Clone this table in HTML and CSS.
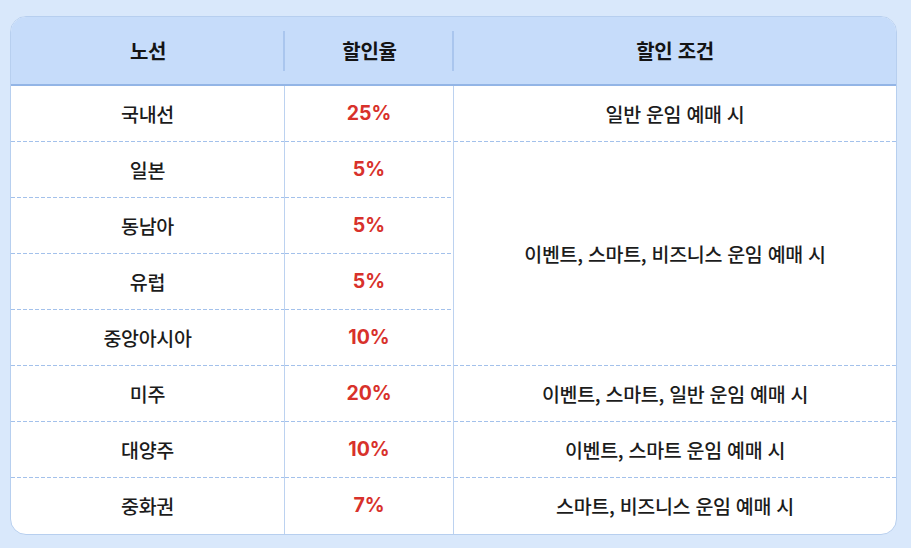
FILE: index.html
```html
<!DOCTYPE html>
<html lang="ko">
<head>
<meta charset="utf-8">
<title>노선별 할인율</title>
<link rel="stylesheet" href="styles.css">
</head>
<body>
<div class="wrap">
  <table class="rates">
    <colgroup>
      <col class="c1"><col class="c2"><col class="c3">
    </colgroup>
    <thead>
      <tr><th class="sep">노선</th><th class="sep">할인율</th><th>할인 조건</th></tr>
    </thead>
    <tbody>
      <tr><td>국내선</td><td class="pct">25%</td><td class="cond">일반 운임 예매 시</td></tr>
      <tr><td>일본</td><td class="pct">5%</td><td class="cond" rowspan="4">이벤트, 스마트, 비즈니스 운임 예매 시</td></tr>
      <tr><td>동남아</td><td class="pct">5%</td></tr>
      <tr><td>유럽</td><td class="pct">5%</td></tr>
      <tr><td>중앙아시아</td><td class="pct">10%</td></tr>
      <tr><td>미주</td><td class="pct">20%</td><td class="cond">이벤트, 스마트, 일반 운임 예매 시</td></tr>
      <tr><td>대양주</td><td class="pct">10%</td><td class="cond">이벤트, 스마트 운임 예매 시</td></tr>
      <tr class="last"><td>중화권</td><td class="pct">7%</td><td class="cond">스마트, 비즈니스 운임 예매 시</td></tr>
    </tbody>
  </table>
</div>
</body>
</html>
```
FILE: styles.css
```css
html, body {
  margin: 0;
  padding: 0;
  background: #d9e8fb;
}
body {
  font-family: "Noto Sans CJK KR", "Noto Sans", sans-serif;
  color: #1c1c1c;
}
.wrap {
  margin: 16px 14px 0 10px;
  border: 1px solid #b7cfef;
  border-radius: 16px;
  overflow: hidden;
  background: #fff;
}
.rates {
  width: 100%;
  border-collapse: separate;
  border-spacing: 0;
  table-layout: fixed;
}
.c1 { width: 274px; }
.c2 { width: 169px; }
.rates th {
  height: 67px;
  padding: 0;
  background-color: #c6dcfa;
  border-bottom: 2px solid #93b5e6;
  font-size: 20px;
  font-weight: 700;
  letter-spacing: -0.3px;
  text-align: center;
  vertical-align: middle;
  color: #141414;
}
.rates th.sep {
  background-image: linear-gradient(#aac6ee, #aac6ee);
  background-size: 2px 40px;
  background-position: right center;
  background-repeat: no-repeat;
}
.rates td {
  height: 54px;
  padding: 0 0 2px;
  text-align: center;
  vertical-align: middle;
  font-size: 19.5px;
  font-weight: 500;
  letter-spacing: -0.3px;
  border-right: 1px solid #bcd2f0;
  background-image: repeating-linear-gradient(to right, #a3c1eb 0 4px, transparent 4px 6px);
  background-size: 100% 1px;
  background-position: left bottom;
  background-repeat: no-repeat;
}
.rates td.cond {
  border-right: none;
}
.rates tr.last td {
  background-image: none;
}
.rates td.pct {
  font-family: "Inter", "Noto Sans CJK KR", sans-serif;
  font-weight: 700;
  color: #d8312b;
  font-size: 19.5px;
  letter-spacing: 0;
}
```
